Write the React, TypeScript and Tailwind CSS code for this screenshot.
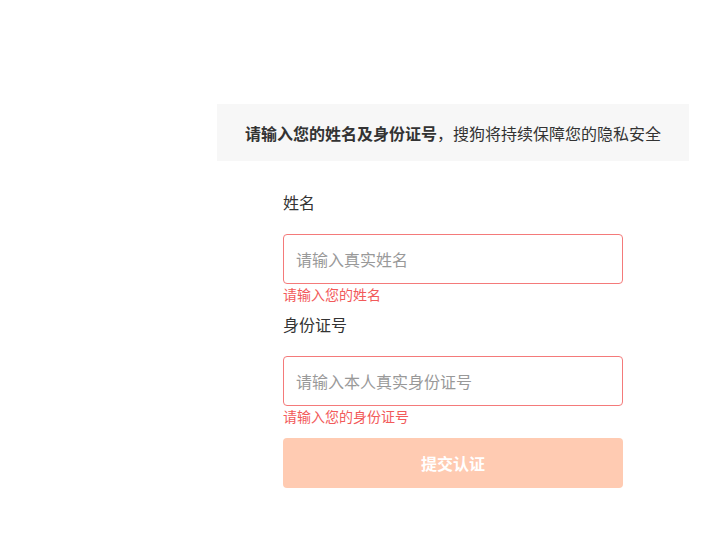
import { useState } from 'react';

const font = "font-['Microsoft_YaHei','Noto_Sans_CJK_SC',sans-serif]";

const Field = ({ label, placeholder, error, className }: { label: string; placeholder: string; error: string; className?: string }) => {
    const [value, setValue] = useState('');
    return (
        <div className={className}>
            <div className="text-[16px] leading-[22px] text-[#333]">{label}</div>
            <input
                type="text"
                value={value}
                placeholder={placeholder}
                onChange={(e) => setValue(e.target.value)}
                className="mt-[21px] block h-[50px] w-full rounded-[4px] border border-[#f47a7a] px-[12px] text-[16px] text-[#333] outline-none placeholder:text-[#999]"
            />
            <div className="mt-[1px] text-[14px] leading-[18px] text-[#f25a5a]">{error}</div>
        </div>
    );
};

export default function App() {
    return (
        <div className={`${font} min-h-[537px] w-full bg-white`}>
            <div className="pt-[104px] pl-[217px]">
                <div className="flex h-[57px] w-[472px] items-center justify-center bg-[#f7f7f7] text-[16px] text-[#333]">
                    <span className="font-bold">请输入您的姓名及身份证号</span>
                    <span>，搜狗将持续保障您的隐私安全</span>
                </div>
                <div className="ml-[66px] w-[340px] pt-[30px]">
                    <Field label="姓名" placeholder="请输入真实姓名" error="请输入您的姓名" />
                    <Field className="mt-[10px]" label="身份证号" placeholder="请输入本人真实身份证号" error="请输入您的身份证号" />
                    <button className="mt-[13px] h-[50px] w-full rounded-[4px] bg-[#ffcbb2] text-[16px] font-bold text-white">
                        提交认证
                    </button>
                </div>
            </div>
        </div>
    );
}
